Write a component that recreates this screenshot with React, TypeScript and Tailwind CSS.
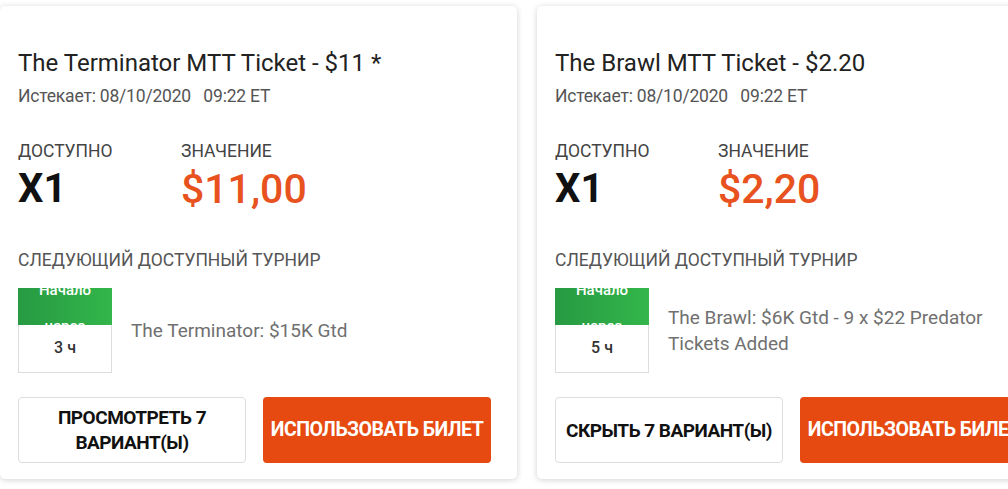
import React from "react";

interface Ticket {
  title: string;
  expires: string;
  value: string;
  hours: string;
  tournament: string;
  variantsLabel: React.ReactNode;
}

const tickets: Ticket[] = [
  {
    title: "The Terminator MTT Ticket - $11 *",
    expires: "Истекает: 08/10/2020\u00a0\u00a0\u00a009:22 ET",
    value: "$11,00",
    hours: "3 ч",
    tournament: "The Terminator: $15K Gtd",
    variantsLabel: (
      <>
        ПРОСМОТРЕТЬ 7<br />ВАРИАНТ(Ы)
      </>
    ),
  },
  {
    title: "The Brawl MTT Ticket - $2.20",
    expires: "Истекает: 08/10/2020\u00a0\u00a0\u00a009:22 ET",
    value: "$2,20",
    hours: "5 ч",
    tournament: "The Brawl: $6K Gtd - 9 x $22 Predator Tickets Added",
    variantsLabel: <>СКРЫТЬ 7 ВАРИАНТ(Ы)</>,
  },
];

function TicketCard({ ticket }: { ticket: Ticket }) {
  return (
    <div className="w-[517px] shrink-0 h-[473px] bg-white rounded-[5px] shadow-[0_1px_6px_rgba(0,0,0,0.18)] pl-[18px] pr-[27px] pt-[41px]">
      <h2 className="text-[24px] leading-[32px] text-[#222]">{ticket.title}</h2>
      <p className="text-[17.5px] leading-[22px] text-[#555] mt-[6px] tracking-[-0.2px]">{ticket.expires}</p>

      <div className="flex mt-[33px]">
        <div className="w-[163px]">
          <div className="text-[17.5px] leading-[22px] text-[#444]">ДОСТУПНО</div>
          <div className="text-[40px] leading-[44px] font-bold text-[#111] mt-[5px]">X1</div>
        </div>
        <div>
          <div className="text-[17.5px] leading-[22px] text-[#444]">ЗНАЧЕНИЕ</div>
          <div className="text-[41px] leading-[44px] font-medium text-[#e8521f] mt-[5px]">{ticket.value}</div>
        </div>
      </div>

      <div className="text-[17.5px] leading-[22px] text-[#555] mt-[38px]">СЛЕДУЮЩИЙ ДОСТУПНЫЙ ТУРНИР</div>

      <div className="flex items-center mt-[17px]">
        <div className="w-[94px] h-[85px] border border-[#ddd] border-t-0 flex flex-col shrink-0">
          <div className="h-[37px] overflow-hidden bg-gradient-to-r from-[#279a42] to-[#33b64b] text-white text-[15px] font-medium text-center leading-[36px] -mx-px">
            <div className="-mt-[16px]">Начало<br />через</div>
          </div>
          <div className="flex-1 flex items-center justify-center text-[16px] text-[#333] font-medium pb-[2px]">
            {ticket.hours}
          </div>
        </div>
        <div className="ml-[19px] text-[19px] leading-[26px] text-[#707070] max-w-[330px]">{ticket.tournament}</div>
      </div>

      <div className="flex gap-[17px] mt-[24px]">
        <button className="w-[228px] h-[66px] shrink-0 border border-[#ddd] rounded-[4px] bg-white text-[19px] leading-[25px] font-bold tracking-[-0.5px] text-[#111] text-center whitespace-nowrap">
          {ticket.variantsLabel}
        </button>
        <button className="w-[228px] h-[66px] shrink-0 rounded-[4px] bg-[#e64a10] text-white text-[19.5px] font-bold tracking-[-0.5px] text-center whitespace-nowrap">
          ИСПОЛЬЗОВАТЬ БИЛЕТ
        </button>
      </div>
    </div>
  );
}

export default function App() {
  return (
    <div className="w-[1008px] h-[489px] overflow-hidden bg-white font-['Roboto',sans-serif]">
      <div className="flex gap-[20px] pt-[6px]">
        {tickets.map((t) => (
          <TicketCard key={t.title} ticket={t} />
        ))}
      </div>
    </div>
  );
}
